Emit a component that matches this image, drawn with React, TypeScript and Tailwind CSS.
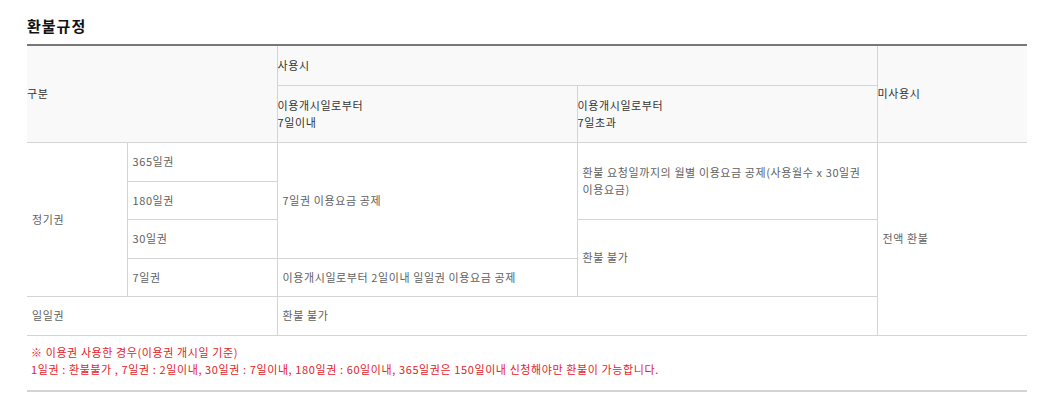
export default function App() {
  const font = { fontFamily: '"Noto Sans CJK KR", "Noto Sans", sans-serif' };
  const th =
    "border-r border-b border-[#d4d4d4] bg-[#f9f9f9] p-0 text-left align-middle font-normal text-[#333]";
  const td = "border-r border-b border-[#d4d4d4] pl-[5px] text-left align-middle text-[#5f5f5f]";

  return (
    <div className="min-h-screen w-full bg-white" style={font}>
      <div className="ml-[27px] w-[1000px] pt-[16px]">
        <h2 className="mb-[8px] text-[15px] leading-[20px] font-bold tracking-[1px] text-[#111]">환불규정</h2>

        <table className="w-[1000px] table-fixed border-collapse border-t-2 border-[#777] text-[11px] leading-[17px] tracking-[0.6px]">
          <colgroup>
            <col className="w-[100px]" />
            <col className="w-[150px]" />
            <col className="w-[300px]" />
            <col className="w-[300px]" />
            <col className="w-[150px]" />
          </colgroup>
          <thead>
            <tr className="h-[40px]">
              <th colSpan={2} rowSpan={2} className={th}>
                구분
              </th>
              <th colSpan={2} className={th}>
                사용시
              </th>
              <th rowSpan={2} className={`${th} border-r-0`}>
                미사용시
              </th>
            </tr>
            <tr className="h-[57px]">
              <th className={th}>
                이용개시일로부터
                <br />
                7일이내
              </th>
              <th className={th}>
                이용개시일로부터
                <br />
                7일초과
              </th>
            </tr>
          </thead>
          <tbody>
            <tr className="h-[39px]">
              <td rowSpan={4} className={td}>
                정기권
              </td>
              <td className={td}>365일권</td>
              <td rowSpan={3} className={td}>
                7일권 이용요금 공제
              </td>
              <td rowSpan={2} className={td}>
                환불 요청일까지의 월별 이용요금 공제(사용월수 x 30일권
                <br />
                이용요금)
              </td>
              <td rowSpan={6} className={`${td} border-r-0`}>
                전액 환불
              </td>
            </tr>
            <tr className="h-[38px]">
              <td className={td}>180일권</td>
            </tr>
            <tr className="h-[39px]">
              <td className={td}>30일권</td>
              <td rowSpan={2} className={td}>
                환불 불가
              </td>
            </tr>
            <tr className="h-[38px]">
              <td className={td}>7일권</td>
              <td className={td}>이용개시일로부터 2일이내 일일권 이용요금 공제</td>
            </tr>
            <tr className="h-[39px]">
              <td colSpan={2} className={td}>
                일일권
              </td>
              <td colSpan={2} className={td}>
                환불 불가
              </td>
            </tr>
          </tbody>
        </table>

        <div className="border-b-2 border-[#d4d4d4] pt-[8px] pb-[12px] pl-[4px] text-[11px] leading-[17px] tracking-[0.6px] text-[#e3222a]">
          <p>※ 이용권 사용한 경우(이용권 개시일 기준)</p>
          <p>
            1일권 : 환불불가 , 7일권 : 2일이내, 30일권 : 7일이내, 180일권 : 60일이내, 365일권은 150일이내
            신청해야만 환불이 가능합니다.
          </p>
        </div>
      </div>
    </div>
  );
}
